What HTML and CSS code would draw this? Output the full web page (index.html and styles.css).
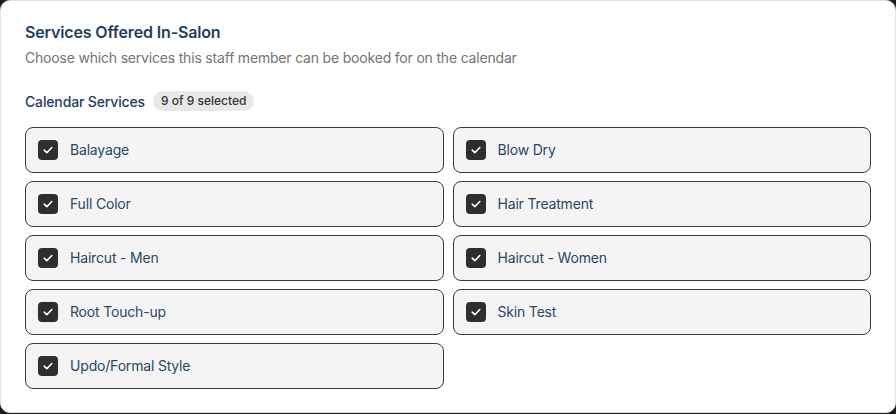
FILE: index.html
```html
<!DOCTYPE html>
<html lang="en">
<head>
<meta charset="utf-8">
<title>Services Offered In-Salon</title>
<link rel="stylesheet" href="styles.css">
</head>
<body>
<div class="card">
  <h2 class="title">Services Offered In-Salon</h2>
  <p class="subtitle">Choose which services this staff member can be booked for on the calendar</p>
  <div class="section-head">
    <span class="section-label">Calendar Services</span>
    <span class="badge">9 of 9 selected</span>
  </div>
  <div class="grid">
    <label class="item"><span class="box"><svg viewBox="0 0 20 20" width="20" height="20"><path d="M6.2 10.2l2.6 2.5 5-5.2" fill="none" stroke="#fff" stroke-width="1.6" stroke-linecap="round" stroke-linejoin="round"/></svg></span><span class="name">Balayage</span></label>
    <label class="item"><span class="box"><svg viewBox="0 0 20 20" width="20" height="20"><path d="M6.2 10.2l2.6 2.5 5-5.2" fill="none" stroke="#fff" stroke-width="1.6" stroke-linecap="round" stroke-linejoin="round"/></svg></span><span class="name">Blow Dry</span></label>
    <label class="item"><span class="box"><svg viewBox="0 0 20 20" width="20" height="20"><path d="M6.2 10.2l2.6 2.5 5-5.2" fill="none" stroke="#fff" stroke-width="1.6" stroke-linecap="round" stroke-linejoin="round"/></svg></span><span class="name">Full Color</span></label>
    <label class="item"><span class="box"><svg viewBox="0 0 20 20" width="20" height="20"><path d="M6.2 10.2l2.6 2.5 5-5.2" fill="none" stroke="#fff" stroke-width="1.6" stroke-linecap="round" stroke-linejoin="round"/></svg></span><span class="name">Hair Treatment</span></label>
    <label class="item"><span class="box"><svg viewBox="0 0 20 20" width="20" height="20"><path d="M6.2 10.2l2.6 2.5 5-5.2" fill="none" stroke="#fff" stroke-width="1.6" stroke-linecap="round" stroke-linejoin="round"/></svg></span><span class="name">Haircut - Men</span></label>
    <label class="item"><span class="box"><svg viewBox="0 0 20 20" width="20" height="20"><path d="M6.2 10.2l2.6 2.5 5-5.2" fill="none" stroke="#fff" stroke-width="1.6" stroke-linecap="round" stroke-linejoin="round"/></svg></span><span class="name">Haircut - Women</span></label>
    <label class="item"><span class="box"><svg viewBox="0 0 20 20" width="20" height="20"><path d="M6.2 10.2l2.6 2.5 5-5.2" fill="none" stroke="#fff" stroke-width="1.6" stroke-linecap="round" stroke-linejoin="round"/></svg></span><span class="name">Root Touch-up</span></label>
    <label class="item"><span class="box"><svg viewBox="0 0 20 20" width="20" height="20"><path d="M6.2 10.2l2.6 2.5 5-5.2" fill="none" stroke="#fff" stroke-width="1.6" stroke-linecap="round" stroke-linejoin="round"/></svg></span><span class="name">Skin Test</span></label>
    <label class="item"><span class="box"><svg viewBox="0 0 20 20" width="20" height="20"><path d="M6.2 10.2l2.6 2.5 5-5.2" fill="none" stroke="#fff" stroke-width="1.6" stroke-linecap="round" stroke-linejoin="round"/></svg></span><span class="name">Updo/Formal Style</span></label>
  </div>
</div>
</body>
</html>
```
FILE: styles.css
```css
* { box-sizing: border-box; }
html, body { margin: 0; padding: 0; }
body {
  background: #1c1c1c;
  font-family: Inter, "Liberation Sans", sans-serif;
  width: 896px;
  height: 414px;
  overflow: hidden;
}
.card {
  width: 896px;
  height: 413px;
  background: #fff;
  border: 1px solid #e2e2e2;
  border-radius: 10px;
  padding: 19px 24px 24px;
}
.title {
  margin: 0;
  font-size: 16px;
  line-height: 24px;
  font-weight: 600;
  letter-spacing: -0.15px;
  color: #1f3d5e;
}
.subtitle {
  margin: 4px 0 0;
  font-size: 14px;
  line-height: 20px;
  letter-spacing: -0.19px;
  color: #737373;
}
.section-head {
  display: flex;
  align-items: center;
  gap: 8px;
  margin-top: 23px;
  height: 20px;
}
.section-label {
  font-size: 14px;
  font-weight: 500;
  letter-spacing: -0.15px;
  color: #1f3d5e;
}
.badge {
  background: #e8e8e8;
  color: #333;
  font-size: 12px;
  line-height: 20px;
  font-weight: 500;
  padding: 0 8px;
  border-radius: 999px;
}
.grid {
  display: grid;
  grid-template-columns: 1fr 1fr;
  gap: 8px 9px;
  margin-top: 16px;
}
.item {
  display: flex;
  align-items: center;
  gap: 12px;
  height: 46px;
  padding: 0 12px;
  background: #f4f4f4;
  border: 1px solid #3a3a3a;
  border-radius: 8px;
}
.box {
  width: 20px;
  height: 20px;
  border-radius: 4px;
  background: #2e2e2e;
  display: flex;
}
.name {
  font-size: 14px;
  line-height: 18px;
  letter-spacing: -0.18px;
  color: #2a4868;
}
```
